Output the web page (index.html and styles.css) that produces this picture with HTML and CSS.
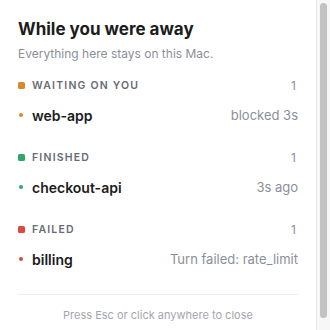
FILE: index.html
```html
<!DOCTYPE html>
<html>
<head>
<meta charset="utf-8">
<link rel="stylesheet" href="styles.css">
</head>
<body>
<div class="window">
<div class="panel">
  <h1 class="title">While you were away</h1>
  <p class="subtitle">Everything here stays on this Mac.</p>

  <section class="group">
    <div class="group-head">
      <span class="sq orange"></span>
      <span class="label">WAITING ON YOU</span>
      <span class="count">1</span>
    </div>
    <div class="row">
      <span class="dot orange"></span>
      <span class="name">web-app</span>
      <span class="meta">blocked 3s</span>
    </div>
  </section>

  <section class="group">
    <div class="group-head">
      <span class="sq green"></span>
      <span class="label">FINISHED</span>
      <span class="count">1</span>
    </div>
    <div class="row">
      <span class="dot green"></span>
      <span class="name">checkout-api</span>
      <span class="meta">3s ago</span>
    </div>
  </section>

  <section class="group">
    <div class="group-head">
      <span class="sq red"></span>
      <span class="label">FAILED</span>
      <span class="count">1</span>
    </div>
    <div class="row">
      <span class="dot red"></span>
      <span class="name">billing</span>
      <span class="meta">Turn failed: rate_limit</span>
    </div>
  </section>

  <div class="footer">Press Esc or click anywhere to close</div>
</div>
<div class="scrollbar"><div class="thumb"></div></div>
</div>
</body>
</html>
```

FILE: styles.css
```css
html, body {
  margin: 0;
  padding: 0;
  background: #ffffff;
  overflow: hidden;
}
body {
  font-family: Inter, "Noto Sans", sans-serif;
  color: #1c1d21;
}
.window {
  display: flex;
  height: 100vh;
}
.panel {
  flex: 1;
  min-width: 0;
  padding: 19px 18px 22px;
}
.scrollbar {
  width: 14px;
  border-left: 1px solid #e8e8e8;
  background: #f7f7f7;
  padding: 3px 3px 12px 3px;
  box-sizing: border-box;
  display: flex;
}
.thumb {
  flex: 1;
  background: #c2c2c2;
  border-radius: 4px;
}
.title {
  margin: 0;
  font-size: 17px;
  line-height: 20px;
  font-weight: 700;
  color: #1b1c20;
}
.subtitle {
  margin: 6px 0 0;
  font-size: 12px;
  line-height: 18px;
  color: #8b8f98;
}
.group {
  margin-top: 14px;
}
.group + .group {
  margin-top: 24px;
}
.group-head {
  display: flex;
  align-items: center;
  height: 16px;
}
.sq {
  width: 7px;
  height: 7px;
  border-radius: 1.5px;
  margin-right: 7px;
}
.label {
  flex: 1;
  font-size: 10.5px;
  font-weight: 600;
  letter-spacing: 1.2px;
  color: #676b74;
}
.count {
  font-size: 12px;
  color: #8b8f98;
  margin-right: 2px;
}
.row {
  display: flex;
  align-items: center;
  height: 20px;
  margin-top: 12px;
}
.dot {
  width: 4px;
  height: 4px;
  border-radius: 50%;
  margin: 0 9px 0 1px;
}
.name {
  flex: 1;
  font-size: 14px;
  font-weight: 600;
  color: #1b1c20;
}
.meta {
  font-size: 13px;
  color: #8b8f98;
}
.orange { background: #d4892a; }
.green { background: #2ea86a; }
.red { background: #dc4a3d; }
.footer {
  margin-top: 25px;
  border-top: 1px solid #ececee;
  padding-top: 12px;
  text-align: center;
  font-size: 11px;
  line-height: 16px;
  color: #a3a6ad;
}
```
